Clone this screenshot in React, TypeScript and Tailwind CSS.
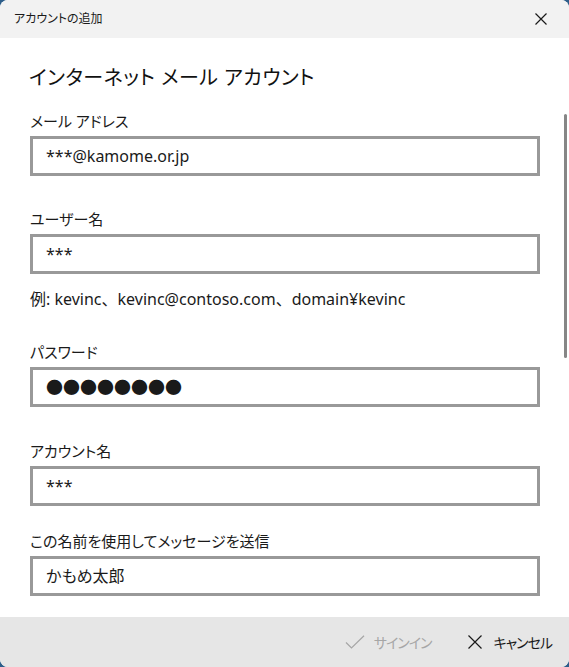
import type { ReactNode } from "react";

const font = {
  fontFamily: '"Noto Sans", "Noto Sans CJK JP", sans-serif',
};

function Field({
  label,
  value,
  top,
  children,
}: {
  label: string;
  value?: string;
  top: string;
  children?: ReactNode;
}) {
  return (
    <div className={top}>
      <div className="h-[20px] text-[15px] leading-[20px] text-[#1a1a1a]">
        {label}
      </div>
      <div className="mt-[5px] flex h-[40px] items-center border-[3px] border-[#999999] bg-white px-[13px] text-[16px] text-[#1a1a1a]">
        {children ?? value}
      </div>
    </div>
  );
}

export default function App() {
  return (
    <div
      className="h-[667px] w-[569px] bg-[#2d5e8a] [font-feature-settings:'palt']"
      style={font}
    >
      <div className="relative flex h-full w-full flex-col overflow-hidden rounded-[8px] bg-white">
        {/* title bar */}
        <div className="flex h-[38px] shrink-0 items-center justify-between bg-[#f2f2f2] pl-[14px] pr-[22px]">
          <span className="text-[12px] text-[#1a1a1a]">アカウントの追加</span>
          <svg width="12" height="12" viewBox="0 0 12 12" className="text-[#1a1a1a]">
            <path d="M0.5 0.5 L11.5 11.5 M11.5 0.5 L0.5 11.5" stroke="currentColor" strokeWidth="1.2" />
          </svg>
        </div>

        {/* content */}
        <div className="flex-1 pl-[30px] pr-[29px]">
          <h1 className="-ml-[1px] mt-[26px] h-[28px] text-[20px] leading-[28px] tracking-[0.5px] text-[#111111]">
            インターネット メール アカウント
          </h1>
          <Field label="メール アドレス" value="***@kamome.or.jp" top="mt-[19px]" />
          <Field label="ユーザー名" value="***" top="mt-[33px]" />
          <div className="mt-[15px] h-[20px] text-[16px] leading-[20px] text-[#1a1a1a] [font-feature-settings:normal]">
            例: kevinc、kevinc@contoso.com、domain¥kevinc
          </div>
          <Field label="パスワード" top="mt-[33px]">
            <span
              className="text-[17px]"
              style={{ fontFamily: '"Noto Sans CJK JP", sans-serif' }}
            >
              ●●●●●●●●
            </span>
          </Field>
          <Field label="アカウント名" value="***" top="mt-[34px]" />
          <Field label="この名前を使用してメッセージを送信" value="かもめ太郎" top="mt-[25px]" />
        </div>

        {/* scrollbar */}
        <div className="absolute right-[2px] top-[114px] h-[244px] w-[3px] rounded-full bg-[#868686]" />

        {/* footer */}
        <div className="flex h-[50px] shrink-0 items-center justify-end gap-[36px] bg-[#e6e6e6] pr-[17px]">
          <div className="flex items-center gap-[9px] text-[14px] tracking-[-1px] text-[#a6a6a6]">
            <svg width="20" height="14" viewBox="0 0 20 14">
              <path d="M1 7.5 L6.5 13 L19 0.8" fill="none" stroke="#a6a6a6" strokeWidth="1.2" />
            </svg>
            <span>サインイン</span>
          </div>
          <div className="flex items-center gap-[12px] text-[14px] tracking-[-1px] text-[#1a1a1a]">
            <svg width="14" height="14" viewBox="0 0 14 14">
              <path d="M0.5 0.5 L13.5 13.5 M13.5 0.5 L0.5 13.5" fill="none" stroke="#1a1a1a" strokeWidth="1.2" />
            </svg>
            <span>キャンセル</span>
          </div>
        </div>
      </div>
    </div>
  );
}
